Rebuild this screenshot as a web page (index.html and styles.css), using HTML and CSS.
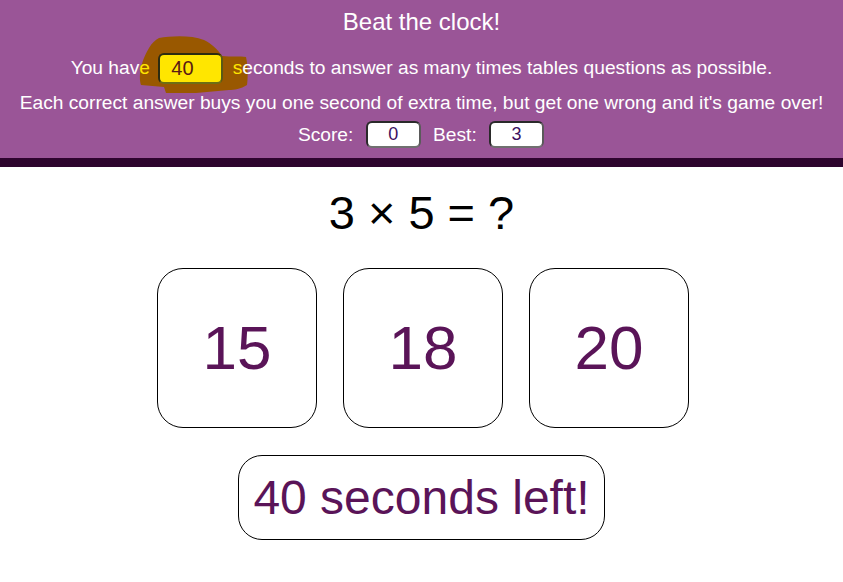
FILE: index.html
```html
<!DOCTYPE html>
<html>
<head>
<meta charset="utf-8">
<link rel="stylesheet" href="styles.css">
</head>
<body>
<header class="top">
  <h1 class="title">Beat the clock!</h1>
  <p class="line line-first">You hav<span class="hl">e</span> <span class="timewrap"><svg class="blob" width="120" height="62" viewBox="0 0 120 62"><path d="M23,2 C35,0 55,-1 68,4 C76,8 82,14 86,20 C95,21 104,20 110,21 C112,30 112,42 111,49 C105,53 98,54 93,54 L60,57 L30,57 L28,51 L5,49 C2,40 5,25 13,12 C16,7 19,4 23,2 Z" fill="#995800"/></svg><span class="timebox">40</span></span> <span class="hl">s</span>econds to answer as many times tables questions as possible.</p>
  <p class="line">Each correct answer buys you one second of extra time, but get one wrong and it's game over!</p>
  <p class="line line-score">Score: <span class="scorebox">0</span> Best: <span class="scorebox">3</span></p>
</header>
<main class="game">
  <div class="question">3 × 5 = ?</div>
  <div class="answers">
    <div class="answer">15</div>
    <div class="answer">18</div>
    <div class="answer">20</div>
  </div>
  <div class="timer">40 seconds left!</div>
</main>
</body>
</html>
```
FILE: styles.css
```css
html, body {
  margin: 0;
  padding: 0;
  background: #ffffff;
  font-family: "Liberation Sans", Arial, sans-serif;
}
.top {
  position: relative;
  z-index: 0;
  background: #9a5597;
  color: #ffffff;
  text-align: center;
  padding: 0 0 8px;
  border-bottom: 9px solid #3c0a3c;
  border-image: linear-gradient(#4e1250, #2e052e) 1;
}
.title {
  margin: 0;
  font-size: 24px;
  font-weight: normal;
  line-height: 44px;
}
.line {
  margin: 0;
  font-size: 19.2px;
  line-height: 34px;
}
.line-first {
  margin-top: 7px;
}
.line-score {
  line-height: 30px;
  padding-left: 6px;
}
.hl {
  color: #ffe600;
}
.timewrap {
  position: relative;
  display: inline-block;
  vertical-align: middle;
  margin: 0 4px 0 3px;
}
.blob {
  position: absolute;
  z-index: -1;
  left: -22px;
  top: -16px;
}
.timebox {
  position: relative;
  display: inline-block;
  box-sizing: border-box;
  width: 65px;
  height: 31px;
  line-height: 27px;
  padding-left: 11px;
  text-align: left;
  background: #ffe600;
  color: #5a1a14;
  font-size: 20px;
  border: 2px solid #2c2c10;
  border-bottom-color: #6e6e14;
  border-right-color: #5a5a14;
  border-radius: 6px;
}
.scorebox {
  display: inline-block;
  vertical-align: middle;
  box-sizing: border-box;
  width: 55px;
  height: 27px;
  line-height: 23px;
  margin: 0 7px 0 7px;
  background: #ffffff;
  color: #3c1060;
  font-size: 18px;
  border: 2px solid #2a2a2a;
  border-bottom-color: #707070;
  border-right-color: #5a5a5a;
  border-radius: 6px;
  position: relative;
  top: -1px;
}
.game {
  display: flex;
  flex-direction: column;
  align-items: center;
}
.question {
  margin-top: 18px;
  font-size: 47px;
  line-height: 56px;
  color: #000000;
}
.answers {
  display: flex;
  gap: 26px;
  margin-top: 27px;
  padding-left: 3px;
}
.answer {
  box-sizing: border-box;
  width: 160px;
  height: 160px;
  border: 1px solid #000000;
  border-radius: 26px;
  display: flex;
  align-items: center;
  justify-content: center;
  font-size: 62px;
  color: #5a1458;
}
.timer {
  box-sizing: border-box;
  margin-top: 27px;
  width: 367px;
  height: 85px;
  border: 1px solid #000000;
  border-radius: 24px;
  display: flex;
  align-items: center;
  justify-content: center;
  font-size: 48px;
  color: #5a1458;
}
```
